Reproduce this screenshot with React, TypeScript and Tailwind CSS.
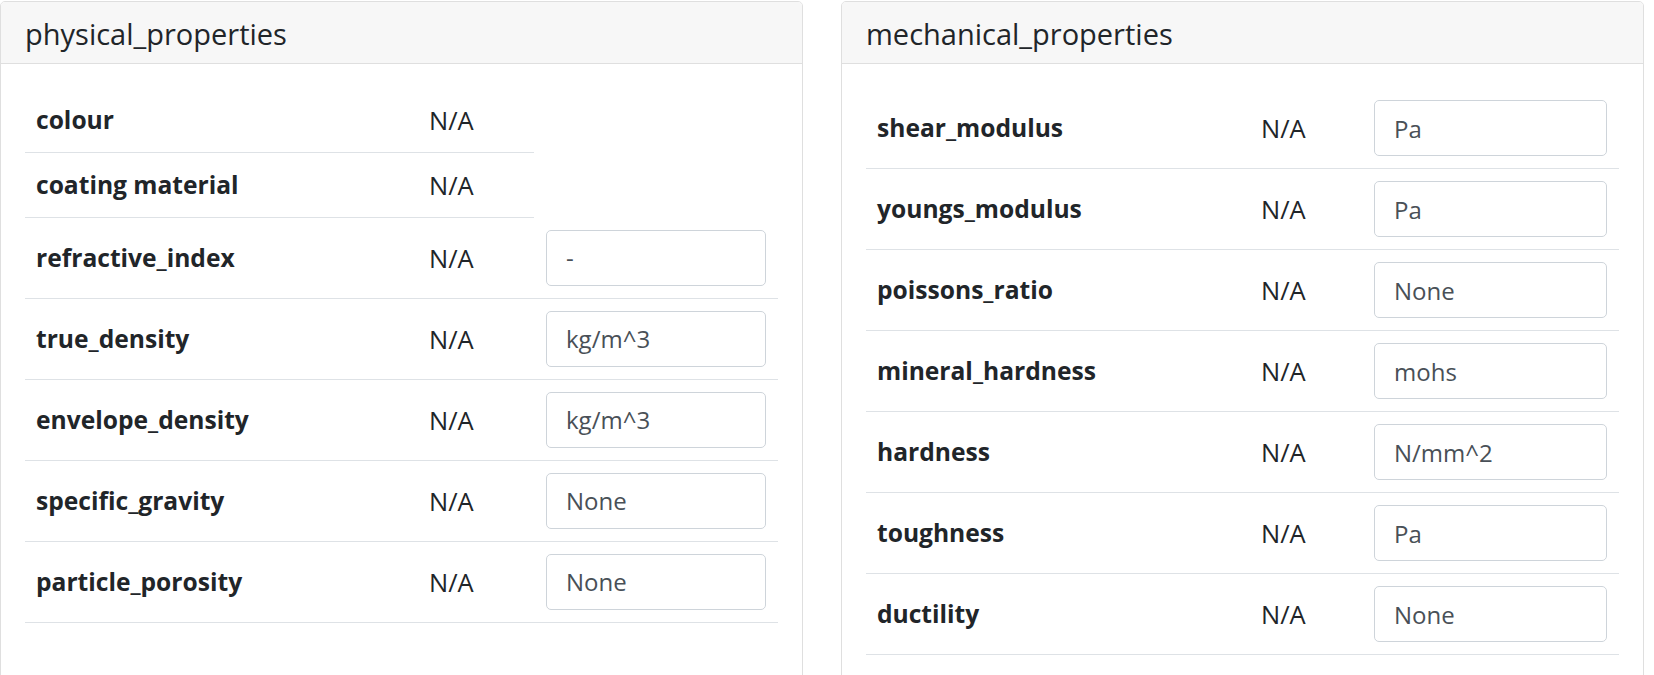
import React from 'react';

type Row = { name: string; value: string; unit?: string };

const physical: Row[] = [
  { name: 'colour', value: 'N/A' },
  { name: 'coating material', value: 'N/A' },
  { name: 'refractive_index', value: 'N/A', unit: '-' },
  { name: 'true_density', value: 'N/A', unit: 'kg/m^3' },
  { name: 'envelope_density', value: 'N/A', unit: 'kg/m^3' },
  { name: 'specific_gravity', value: 'N/A', unit: 'None' },
  { name: 'particle_porosity', value: 'N/A', unit: 'None' },
];

const mechanical: Row[] = [
  { name: 'shear_modulus', value: 'N/A', unit: 'Pa' },
  { name: 'youngs_modulus', value: 'N/A', unit: 'Pa' },
  { name: 'poissons_ratio', value: 'N/A', unit: 'None' },
  { name: 'mineral_hardness', value: 'N/A', unit: 'mohs' },
  { name: 'hardness', value: 'N/A', unit: 'N/mm^2' },
  { name: 'toughness', value: 'N/A', unit: 'Pa' },
  { name: 'ductility', value: 'N/A', unit: 'None' },
];

const PropertyCard = ({
  title,
  rows,
  cols,
}: {
  title: string;
  rows: Row[];
  cols: [string, string, string];
}) => (
  <div className="flex flex-col border border-[#dfdfdf] rounded-[5px] bg-white overflow-hidden">
    {/* card header */}
    <div className="h-[62px] flex items-center px-6 bg-[#f7f7f7] border-b border-[#dfdfdf]">
      <h4 className="text-[29px] leading-none text-[#212529] font-normal pt-px">{title}</h4>
    </div>

    {/* card body */}
    <div className="px-6 pt-6 pb-6 flex-1">
      <table className="w-full table-fixed border-collapse">
        <colgroup>
          <col style={{ width: cols[0] }} />
          <col style={{ width: cols[1] }} />
          <col style={{ width: cols[2] }} />
        </colgroup>
        <tbody>
          {rows.map((r) => (
            <tr key={r.name}>
              <td className="pl-[11px] pr-3 py-3 border-b border-[#dee2e6] align-middle text-[24.6px] leading-[40px] font-bold text-[#212529] whitespace-nowrap">
                {r.name}
              </td>
              <td className="pl-[11px] pr-3 py-3 border-b border-[#dee2e6] align-middle text-[25.5px] leading-[40px] text-[#212529]">
                {r.value}
              </td>
              {r.unit !== undefined && (
                <td className="px-3 py-3 border-b border-[#dee2e6] align-middle">
                  <input
                    readOnly
                    value={r.unit}
                    className="block w-full h-[56px] px-[19px] border border-[#ced4da] rounded-[5px] bg-white text-[24px] text-[#495057] outline-none"
                  />
                </td>
              )}
            </tr>
          ))}
        </tbody>
      </table>
    </div>
  </div>
);

export default function App() {
  return (
    <div className="min-h-screen bg-white pt-px pr-[10px] font-['Open_Sans',sans-serif]">
      <div className="grid grid-cols-2 gap-[38px] items-stretch">
        <PropertyCard title="physical_properties" rows={physical} cols={['393px', '116px', '244px']} />
        <PropertyCard title="mechanical_properties" rows={mechanical} cols={['384px', '112px', '257px']} />
      </div>
    </div>
  );
}
